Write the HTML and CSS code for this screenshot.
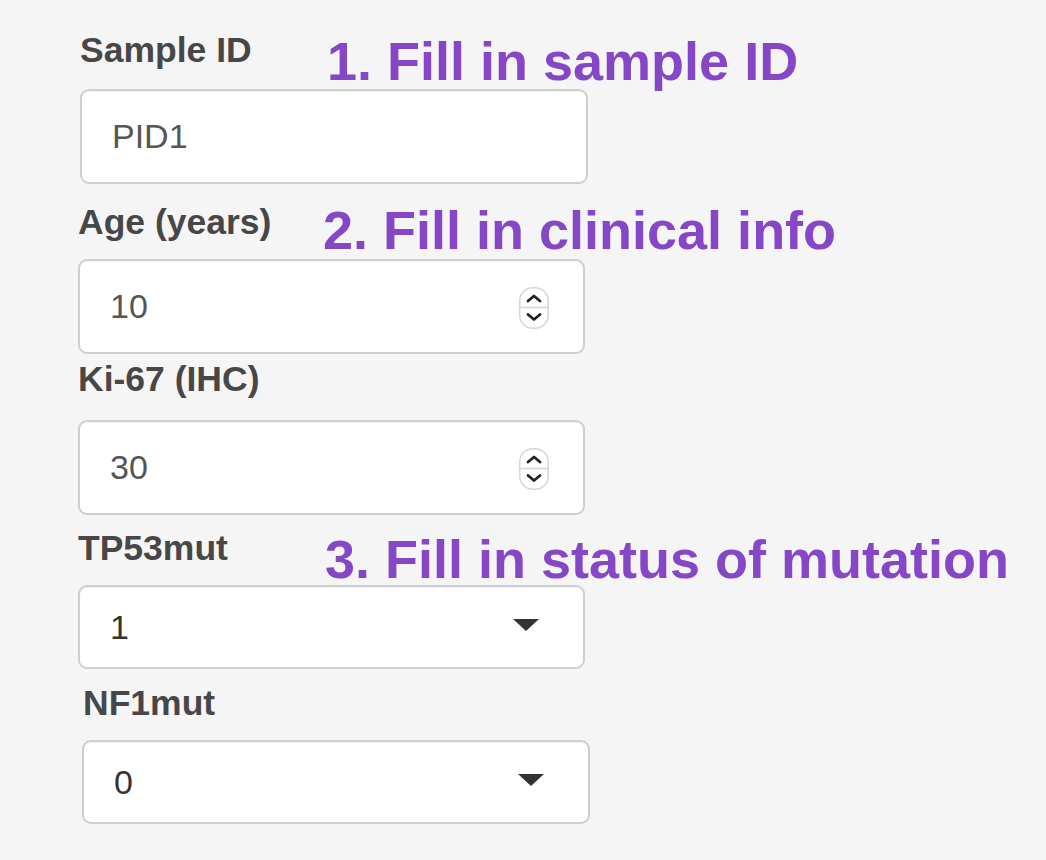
FILE: index.html
```html
<!DOCTYPE html>
<html>
<head>
<meta charset="utf-8">
<link rel="stylesheet" href="styles.css">
</head>
<body>
<div class="page">
  <div class="form">
    <div class="group g-sample">
      <label class="lbl">Sample ID</label>
      <div class="field">PID1</div>
    </div>
    <div class="group g-age">
      <label class="lbl">Age (years)</label>
      <div class="field">10
        <span class="spin">
          <svg width="30" height="42" viewBox="0 0 30 42">
            <rect x="0.75" y="0.75" width="28.5" height="40.5" rx="13" fill="#fff" stroke="#d6d6d6" stroke-width="1.5"/>
            <line x1="1" y1="20.5" x2="29" y2="20.5" stroke="#d6d6d6" stroke-width="1.5"/>
            <path d="M9 14 L15 9 L21 14" fill="none" stroke="#222" stroke-width="2.8" stroke-linecap="round" stroke-linejoin="round"/>
            <path d="M9 27.5 L15 32.5 L21 27.5" fill="none" stroke="#222" stroke-width="2.8" stroke-linecap="round" stroke-linejoin="round"/>
          </svg>
        </span>
      </div>
    </div>
    <div class="group g-ki">
      <label class="lbl">Ki-67 (IHC)</label>
      <div class="field">30
        <span class="spin">
          <svg width="30" height="42" viewBox="0 0 30 42">
            <rect x="0.75" y="0.75" width="28.5" height="40.5" rx="13" fill="#fff" stroke="#d6d6d6" stroke-width="1.5"/>
            <line x1="1" y1="20.5" x2="29" y2="20.5" stroke="#d6d6d6" stroke-width="1.5"/>
            <path d="M9 14 L15 9 L21 14" fill="none" stroke="#222" stroke-width="2.8" stroke-linecap="round" stroke-linejoin="round"/>
            <path d="M9 27.5 L15 32.5 L21 27.5" fill="none" stroke="#222" stroke-width="2.8" stroke-linecap="round" stroke-linejoin="round"/>
          </svg>
        </span>
      </div>
    </div>
    <div class="group g-tp53">
      <label class="lbl">TP53mut</label>
      <div class="field select">1<span class="caret"></span></div>
    </div>
    <div class="group g-nf1">
      <label class="lbl">NF1mut</label>
      <div class="field select">0<span class="caret"></span></div>
    </div>
  </div>
  <div class="note n1">1. Fill in sample ID</div>
  <div class="note n2">2. Fill in clinical info</div>
  <div class="note n3">3. Fill in status of mutation</div>
</div>
</body>
</html>
```

FILE: styles.css
```css
html, body {
  margin: 0;
  padding: 0;
  background: #f5f5f5;
}
body {
  font-family: "Liberation Sans", Arial, sans-serif;
  width: 1046px;
  height: 860px;
  overflow: hidden;
}
.page {
  position: relative;
  width: 1046px;
  height: 860px;
}
.form {
  display: flex;
  flex-direction: column;
  padding-top: 30px;
}
.group {
  display: flex;
  flex-direction: column;
  align-items: flex-start;
}
.lbl {
  display: block;
  font-size: 35.5px;
  font-weight: bold;
  line-height: 40px;
  color: #474747;
}
.field {
  position: relative;
  box-sizing: border-box;
  width: 507px;
  height: 95px;
  background: #fff;
  border: 2px solid #cfcfcf;
  border-radius: 9px;
  box-shadow: inset 0 1px 1px rgba(0,0,0,0.06);
  display: flex;
  align-items: center;
  padding-left: 30px;
  font-size: 34px;
  color: #555;
}
.field.select {
  height: 84px;
  color: #333;
}
.g-sample { margin-left: 80px; }
.g-sample .lbl { margin-bottom: 19px; }
.g-sample .field { width: 508px; }
.g-age { margin-left: 78px; margin-top: 18px; }
.g-age .lbl { margin-bottom: 17px; }
.g-ki { margin-left: 78px; margin-top: 5px; }
.g-ki .lbl { margin-bottom: 21px; }
.g-tp53 { margin-left: 78px; margin-top: 13px; }
.g-tp53 .lbl { margin-bottom: 17px; }
.g-nf1 { margin-left: 82px; margin-top: 14px; }
.g-nf1 .lbl { margin-left: 1px; margin-bottom: 17px; }
.g-nf1 .field { width: 508px; }

.spin {
  position: absolute;
  right: 34px;
  top: 26px;
  width: 30px;
  height: 42px;
  display: block;
}
.spin svg { display: block; }

.caret {
  position: absolute;
  right: 44px;
  top: 32px;
  width: 0;
  height: 0;
  border-left: 13px solid transparent;
  border-right: 13px solid transparent;
  border-top: 12px solid #333;
}

.note {
  position: absolute;
  font-size: 54px;
  font-weight: bold;
  line-height: 60px;
  color: #8547c5;
  white-space: nowrap;
}
.n1 { left: 327px; top: 31px; }
.n2 { left: 323px; top: 200px; }
.n3 { left: 325px; top: 529px; }
```
